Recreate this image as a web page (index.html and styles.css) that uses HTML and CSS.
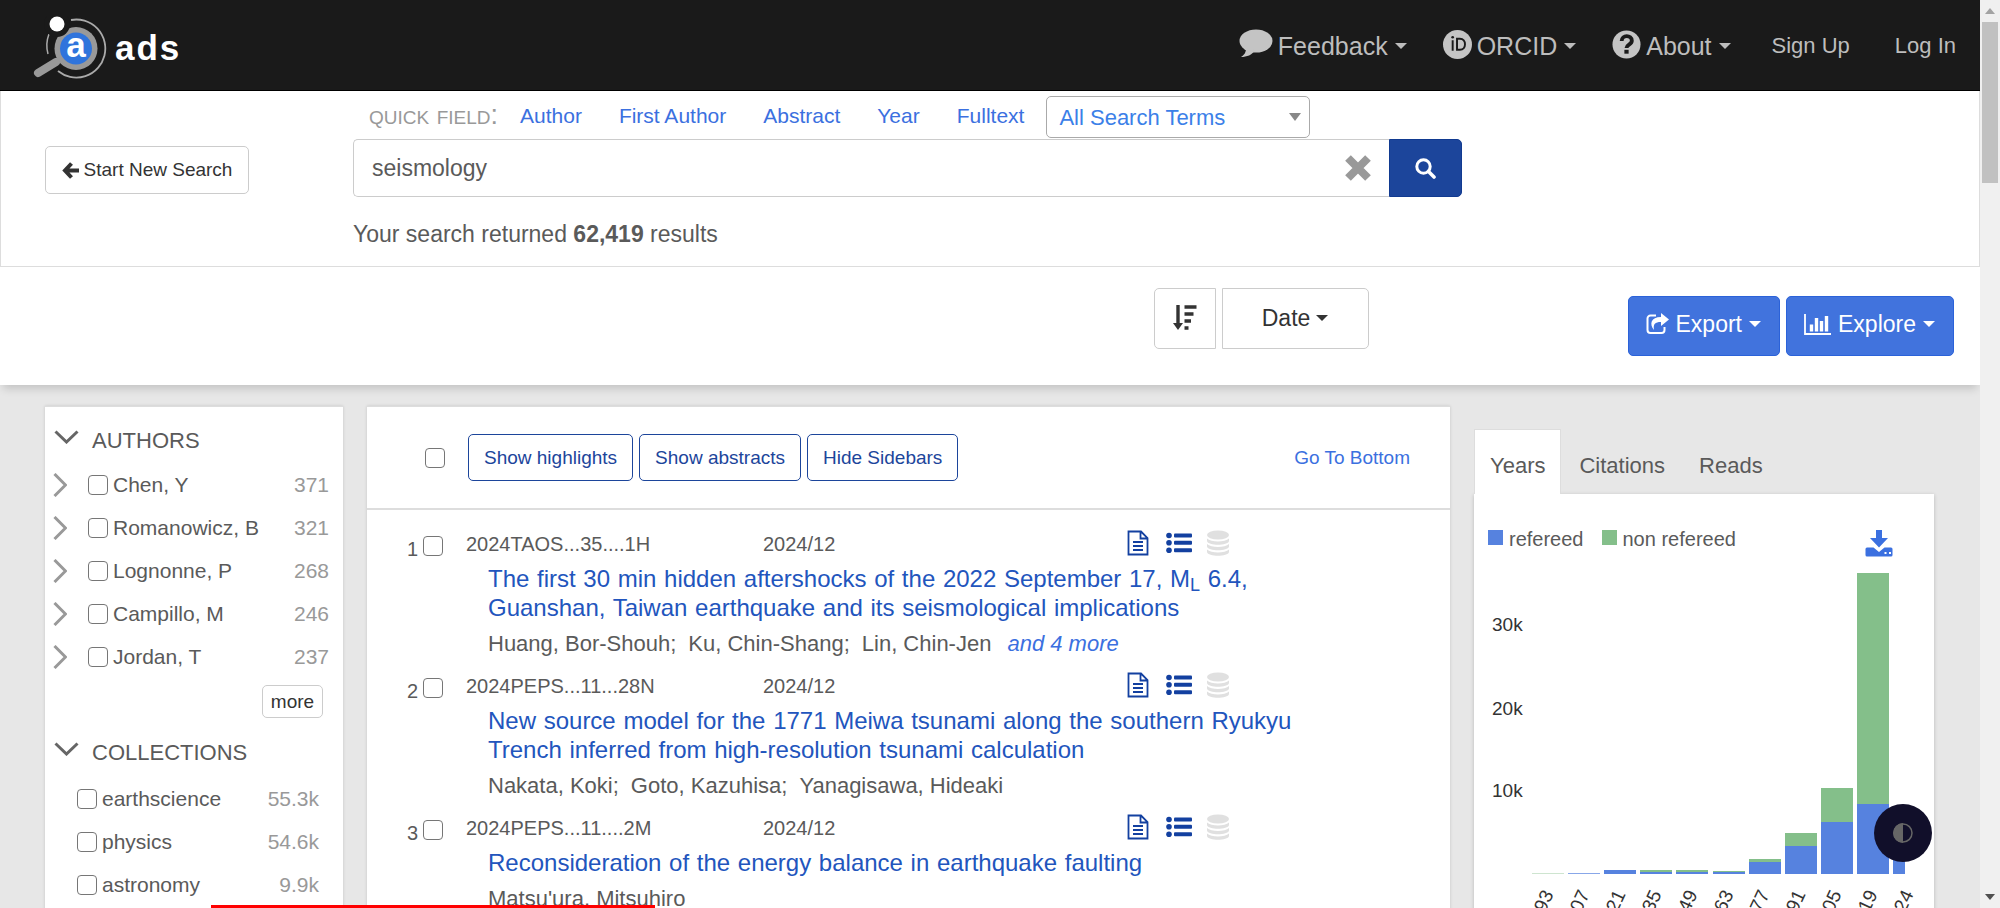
FILE: index.html
```html
<!DOCTYPE html>
<html lang="en">
<head>
<meta charset="utf-8">
<title>seismology - ads search</title>
<link rel="stylesheet" href="styles.css">
</head>
<body>
<svg class="defs" aria-hidden="true">
  <symbol id="i-file" viewBox="0 0 22 26"><path d="M1.500 1.500H14l6.500 6.500v16.500h-19zM13.500 1.500V8.500h7M6 12h10M6 16h10M6 20h10" fill="none" stroke="currentColor" stroke-width="1.800"/></symbol>
  <symbol id="i-list" viewBox="0 0 26 22"><g fill="currentColor"><circle cx="3" cy="3.500" r="2.800"/><circle cx="3" cy="10.800" r="2.800"/><circle cx="3" cy="18.200" r="2.800"/><rect x="8" y="1.500" width="18" height="4" rx="1"/><rect x="8" y="8.800" width="18" height="4" rx="1"/><rect x="8" y="16.200" width="18" height="4" rx="1"/></g></symbol>
  <symbol id="i-db" viewBox="0 0 22 26"><g fill="currentColor"><ellipse cx="11" cy="5" rx="11" ry="4.600"/><path d="M0 8.500c4 4 18 4 22 0v2.500c-1 5-21 5-22 0z"/><path d="M0 14c4 4 18 4 22 0v2.500c-1 5-21 5-22 0z"/><path d="M0 19.500c4 4 18 4 22 0v2.500c-1 5-21 5-22 0z"/></g></symbol>
  <symbol id="i-down" viewBox="0 0 24 14"><path d="M1 1.500l11 10.500L23 1.500" fill="none" stroke="currentColor" stroke-width="3"/></symbol>
  <symbol id="i-right" viewBox="0 0 14 24"><path d="M1.500 1l11 11-11 11" fill="none" stroke="currentColor" stroke-width="3"/></symbol>
  <symbol id="i-caret" viewBox="0 0 12 6"><path d="M0 0h12L6 6z" fill="currentColor"/></symbol>
</svg>
<div class="window">
<div class="page">
  <header class="topbar">
    <a class="brand" href="#">
      <svg class="brand-mark" viewBox="0 0 74 64" aria-hidden="true">
        <g fill="none" stroke="#aaa" stroke-width="1.800"><path d="M38 4a29 29 0 1 1-13 51"/><path d="M16 18a32 32 0 0 0-1 20" stroke-width="1.500"/></g>
        <path d="M23 46L5 57" stroke="#999" stroke-width="8" stroke-linecap="round"/>
        <circle cx="43" cy="32.500" r="21.500" fill="#999"/>
        <circle cx="43" cy="32.500" r="16" fill="#2f74dc"/>
        <circle cx="24" cy="8" r="13" fill="#1a1a1a"/>
        <circle cx="24" cy="8" r="7.500" fill="#fff"/>
        <text x="43" y="41" text-anchor="middle" class="brand-letter">a</text>
      </svg>
      <span class="brand-name">ads</span>
    </a>
    <nav class="topnav">
      <a class="nav-big" href="#"><svg width="34" height="30" viewBox="0 0 34 30" aria-hidden="true"><ellipse cx="17" cy="12" rx="16.500" ry="11.500" fill="#c4c4c4"/><path d="M7 19c0 5-2 7-5 9 6 0 11-2 14-7z" fill="#c4c4c4"/></svg><span>Feedback</span><svg class="caret"><use href="#i-caret"/></svg></a>
      <a class="nav-big" href="#"><svg width="29" height="29" viewBox="0 0 30 30" aria-hidden="true"><circle cx="15" cy="15" r="15" fill="#c4c4c4"/><path d="M10 10.500v11M14.500 9v11.500h3c7 0 7-11.500 0-11.500z" fill="none" stroke="#1a1a1a" stroke-width="2"/><circle cx="10" cy="7.500" r="1.400" fill="#1a1a1a"/></svg><span>ORCID</span><svg class="caret"><use href="#i-caret"/></svg></a>
      <a class="nav-big" href="#"><svg width="29" height="29" viewBox="0 0 30 30" aria-hidden="true"><circle cx="15" cy="15" r="14.500" fill="#c4c4c4"/><path d="M10 11.500c0-7 10.500-6.500 10.500-.5 0 4-5.500 4-5.500 7.500" fill="none" stroke="#1a1a1a" stroke-width="4"/><rect x="12.800" y="20.500" width="4.400" height="4" fill="#1a1a1a"/></svg><span>About</span><svg class="caret"><use href="#i-caret"/></svg></a>
      <a class="nav-small" href="#">Sign Up</a>
      <a class="nav-small" href="#">Log In</a>
    </nav>
  </header>

  <section class="search">
    <div class="search-side">
      <button class="btn start" type="button"><svg width="17" height="17" viewBox="0 0 17 17" aria-hidden="true"><path d="M9.500 1.500L3 8.500l6.500 7M3 8.500h14" fill="none" stroke="#333" stroke-width="4"/></svg>Start New Search</button>
    </div>
    <form class="search-form">
      <div class="quick">
        <span class="quick-label">quick field:</span>
        <a href="#">Author</a><a href="#">First Author</a><a href="#">Abstract</a><a href="#">Year</a><a href="#">Fulltext</a>
        <span class="select-wrap"><select aria-label="All Search Terms"><option>All Search Terms</option></select><svg class="select-caret" viewBox="0 0 12 8" aria-hidden="true"><path d="M0 0h12L6 8z" fill="#888"/></svg></span>
      </div>
      <div class="query">
        <input type="text" value="seismology" aria-label="Search query">
        <button class="clear" type="button" aria-label="Clear"><svg width="28" height="28" viewBox="0 0 28 28"><path d="M4 4l20 20M24 4L4 24" stroke="#999" stroke-width="8"/></svg></button>
        <button class="go" type="submit" aria-label="Search"><svg width="21" height="21" viewBox="0 0 21 21"><circle cx="8.500" cy="8.500" r="6.700" fill="none" stroke="#fff" stroke-width="3"/><path d="M13.500 13.500l5.500 5.500" stroke="#fff" stroke-width="3.600" stroke-linecap="round"/></svg></button>
      </div>
      <p class="returned">Your search returned <b>62,419</b> results</p>
    </form>
  </section>

  <section class="toolbar">
    <div class="sort">
      <button class="btn sort-dir" type="button" aria-label="Sort descending"><svg width="24" height="26" viewBox="0 0 24 26"><path d="M5 0v20" stroke="#333" stroke-width="3.400"/><path d="M0 18h10l-5 7z" fill="#333"/><path d="M11.500 2h12M11.500 9h9M11.500 16h6.500M11.500 23h4" stroke="#333" stroke-width="3.400"/></svg></button>
      <button class="btn sort-by" type="button">Date<svg class="caret"><use href="#i-caret"/></svg></button>
    </div>
    <div class="actions">
      <button class="action" type="button"><svg width="23" height="22" viewBox="0 0 23 22" aria-hidden="true"><path d="M10 2.500H4.500a3 3 0 0 0-3 3v11.500a3 3 0 0 0 3 3h11a3 3 0 0 0 3-3v-3" fill="none" stroke="#fff" stroke-width="2"/><path d="M15 0l8 6.500-8 6.500V9c-6 0-8 2-7 8-5-6-3-13 7-13z" fill="#fff"/></svg>Export<svg class="caret"><use href="#i-caret"/></svg></button>
      <button class="action" type="button"><svg width="27" height="21" viewBox="0 0 27 21" aria-hidden="true"><path d="M1 0v20h26" fill="none" stroke="#fff" stroke-width="1.800"/><path d="M7.500 17.500v-7M12.500 17.500V4M17.500 17.500V7M22.500 17.500V2" stroke="#fff" stroke-width="3.400"/></svg>Explore<svg class="caret"><use href="#i-caret"/></svg></button>
    </div>
  </section>

  <main class="content">
    <aside class="facets">
      <h2><svg class="chev-down"><use href="#i-down"/></svg>AUTHORS</h2>
      <ul class="facet authors">
        <li><svg class="chev-right"><use href="#i-right"/></svg><label><input type="checkbox">Chen, Y</label><span>371</span></li>
        <li><svg class="chev-right"><use href="#i-right"/></svg><label><input type="checkbox">Romanowicz, B</label><span>321</span></li>
        <li><svg class="chev-right"><use href="#i-right"/></svg><label><input type="checkbox">Lognonne, P</label><span>268</span></li>
        <li><svg class="chev-right"><use href="#i-right"/></svg><label><input type="checkbox">Campillo, M</label><span>246</span></li>
        <li><svg class="chev-right"><use href="#i-right"/></svg><label><input type="checkbox">Jordan, T</label><span>237</span></li>
      </ul>
      <button class="btn more" type="button">more</button>
      <h2><svg class="chev-down"><use href="#i-down"/></svg>COLLECTIONS</h2>
      <ul class="facet collections">
        <li><label><input type="checkbox">earthscience</label><span>55.3k</span></li>
        <li><label><input type="checkbox">physics</label><span>54.6k</span></li>
        <li><label><input type="checkbox">astronomy</label><span>9.9k</span></li>
      </ul>
    </aside>

    <section class="results">
      <div class="results-head">
        <input type="checkbox" aria-label="Select all">
        <button class="outline" type="button">Show highlights</button>
        <button class="outline" type="button">Show abstracts</button>
        <button class="outline" type="button">Hide Sidebars</button>
        <a class="bottom-link" href="#">Go To Bottom</a>
      </div>
      <ol class="items">
        <li>
          <label class="pick"><span>1</span><input type="checkbox"></label>
          <div class="item">
            <div class="meta"><span>2024TAOS...35....1H</span><span>2024/12</span><span class="icons"><svg class="i-file"><use href="#i-file"/></svg><svg class="i-list"><use href="#i-list"/></svg><svg class="i-db"><use href="#i-db"/></svg></span></div>
            <h3><a href="#">The first 30 min hidden aftershocks of the 2022 September 17, M<sub>L</sub> 6.4, Guanshan, Taiwan earthquake and its seismological implications</a></h3>
            <p><span>Huang, Bor-Shouh;</span><span>Ku, Chin-Shang;</span><span>Lin, Chin-Jen</span><a href="#">and 4 more</a></p>
          </div>
        </li>
        <li>
          <label class="pick"><span>2</span><input type="checkbox"></label>
          <div class="item">
            <div class="meta"><span>2024PEPS...11...28N</span><span>2024/12</span><span class="icons"><svg class="i-file"><use href="#i-file"/></svg><svg class="i-list"><use href="#i-list"/></svg><svg class="i-db"><use href="#i-db"/></svg></span></div>
            <h3><a href="#">New source model for the 1771 Meiwa tsunami along the southern Ryukyu Trench inferred from high-resolution tsunami calculation</a></h3>
            <p><span>Nakata, Koki;</span><span>Goto, Kazuhisa;</span><span>Yanagisawa, Hideaki</span></p>
          </div>
        </li>
        <li>
          <label class="pick"><span>3</span><input type="checkbox"></label>
          <div class="item">
            <div class="meta"><span>2024PEPS...11....2M</span><span>2024/12</span><span class="icons"><svg class="i-file"><use href="#i-file"/></svg><svg class="i-list"><use href="#i-list"/></svg><svg class="i-db"><use href="#i-db"/></svg></span></div>
            <h3><a href="#">Reconsideration of the energy balance in earthquake faulting</a></h3>
            <p><span>Matsu'ura, Mitsuhiro</span></p>
          </div>
        </li>
      </ol>
    </section>

    <aside class="graphs">
      <nav class="tabs"><button class="tab active" type="button">Years</button><button class="tab" type="button">Citations</button><button class="tab" type="button">Reads</button></nav>
      <div class="panel">
        <div class="legend">
          <span class="key refereed">refereed</span><span class="key non">non refereed</span>
          <a class="download" href="#" aria-label="Download"><svg width="28" height="27" viewBox="0 0 28 27"><path d="M11 0h6v8h6l-9 9.500L5 8h6z" fill="#3b70e0"/><path d="M2 17.500h6.500L14 22l5.500-4.500H26a1.500 1.500 0 0 1 1.500 1.500v6a1.500 1.500 0 0 1-1.500 1.500H2A1.500 1.500 0 0 1 .5 25v-6A1.500 1.500 0 0 1 2 17.500z" fill="#3b70e0"/><path d="M19.500 23h2M24 23h2" stroke="#fff" stroke-width="1.800"/></svg></a>
        </div>
        <svg class="chart" viewBox="0 0 460 400" role="img" aria-label="Papers per year">
          <g class="ticks"><text x="18" y="72">30k</text><text x="18" y="156">20k</text><text x="18" y="238">10k</text></g>
          <g fill="#84bf8a">
            <rect x="58" y="314" width="32" height="1" opacity=".4"/><rect x="166" y="311" width="32" height="2"/><rect x="202" y="311" width="32" height="2"/><rect x="239" y="312" width="32" height="1"/><rect x="275" y="300" width="32" height="3"/><rect x="311" y="274" width="32" height="13"/><rect x="347" y="229" width="32" height="34"/><rect x="383" y="14" width="32" height="231"/>
          </g>
          <g fill="#5682df">
            <rect x="94" y="314" width="32" height="1" opacity=".7"/><rect x="130" y="311" width="32" height="4"/><rect x="166" y="313" width="32" height="2"/><rect x="202" y="313" width="32" height="2"/><rect x="239" y="313" width="32" height="2"/><rect x="275" y="303" width="32" height="12"/><rect x="311" y="287" width="32" height="28"/><rect x="347" y="263" width="32" height="52"/><rect x="383" y="245" width="32" height="70"/><rect x="419" y="290" width="12" height="25"/>
          </g>
          <g class="years">
            <text transform="translate(80 335) rotate(-65)">1893</text><text transform="translate(116 335) rotate(-65)">1907</text><text transform="translate(152 335) rotate(-65)">1921</text><text transform="translate(188 335) rotate(-65)">1935</text><text transform="translate(224 335) rotate(-65)">1949</text><text transform="translate(260 335) rotate(-65)">1963</text><text transform="translate(296 335) rotate(-65)">1977</text><text transform="translate(332 335) rotate(-65)">1991</text><text transform="translate(368 335) rotate(-65)">2005</text><text transform="translate(404 335) rotate(-65)">2019</text><text transform="translate(440 335) rotate(-65)">2024</text>
          </g>
        </svg>
      </div>
    </aside>
  </main>
</div>
<div class="scrollbar" aria-hidden="true">
  <svg viewBox="0 0 20 22"><path d="M5 14h10l-5-6z" fill="#a3a3a3"/></svg>
  <div class="thumb"></div>
  <svg class="last" viewBox="0 0 20 22"><path d="M5 8h10l-5 6z" fill="#505050"/></svg>
</div>
</div>
<button class="contrast" type="button" aria-label="Toggle dark mode"><svg width="20" height="20" viewBox="0 0 20 20"><circle cx="10" cy="10" r="9" fill="none" stroke="#666" stroke-width="1.500"/><path d="M10 0a10 10 0 0 0 0 20z" fill="#666"/></svg></button>
<div class="progress"></div>
</body>
</html>
```
FILE: styles.css
```css
* { box-sizing: border-box; }
body { margin: 0; font: 20px/28px "Liberation Sans", Arial, sans-serif; color: #5a5a5a; background: #e7e7e7; overflow: hidden; }
a { color: #3b70e0; text-decoration: none; }
button, input, select { font: inherit; color: inherit; }
button { padding: 0; cursor: pointer; }
h2, h3, p, ul, ol { margin: 0; padding: 0; font-weight: 400; list-style: none; }
svg { flex: none; }
input[type="checkbox"] { appearance: none; flex: none; width: 20px; height: 20px; margin: 0; border: 1px solid #767676; border-radius: 4px; background: #fff; }
.defs { display: none; }
.caret { width: 12px; height: 6px; margin-left: 8px; }

.window { display: flex; height: 100vh; }
.page { flex: 1; min-width: 0; overflow: hidden; }

.topbar { display: flex; justify-content: space-between; height: 91px; padding: 0 24px 0 33px; background: #1a1a1a; border-bottom: 1px solid #000; }
.brand { display: flex; gap: 8px; padding-top: 16px; }
.brand-mark { width: 74px; height: 64px; }
.brand-letter { font: bold 35px "Liberation Sans", Arial, sans-serif; fill: #fff; }
.brand-name { font-weight: bold; font-size: 35px; line-height: 63px; letter-spacing: 2px; color: #fff; }
.topnav { display: flex; align-items: center; padding-top: 2px; }
.topnav a { color: #bdbdbd; display: flex; align-items: center; }
.nav-big { font-size: 25px; gap: 5px; margin-right: 36px; }
.nav-big .caret { margin-left: 2px; }
.nav-big > svg:first-child { margin-bottom: 4px; }
.nav-small { font-size: 22px; margin-left: 5px; margin-right: 40px; }
.nav-small:last-child { margin-right: 0; }

.search { display: grid; grid-template-columns: 352px 1fr; height: 176px; padding-top: 3px; background: #fff; border: 1px solid #ddd; border-top: 0; }
.search-side { padding: 52px 0 0 44px; }
.btn { display: flex; align-items: center; justify-content: center; background: #fff; border: 1px solid #ccc; border-radius: 5px; color: #333; }
.start { gap: 5px; width: 204px; height: 48px; font-size: 19px; }
.search-form { width: 1109px; }
.quick { display: flex; align-items: flex-start; height: 45px; padding-left: 16px; }
.quick-label { width: 151px; font-size: 27px; line-height: 42px; font-variant: small-caps; color: #999; }
.quick a { margin-right: 37px; font-size: 21px; line-height: 44px; }
.quick a:nth-of-type(5) { margin-right: 22px; }
.select-wrap { position: relative; width: 264px; margin-top: 2px; }
.select-wrap select { appearance: none; width: 100%; height: 42px; padding: 2px 12px 0; font-size: 22px; color: #3b80e8; background: #fff; border: 1px solid #aaa; border-radius: 5px; }
.select-caret { position: absolute; right: 9px; top: 17px; width: 12px; height: 8px; }
.query { display: flex; height: 58px; }
.query input { flex: 1; min-width: 0; padding: 0 18px; font-size: 23px; border: 1px solid #ccc; border-right: 0; border-radius: 5px 0 0 5px; outline: 0; }
.clear { display: flex; align-items: center; justify-content: center; width: 63px; background: #fff; border: solid #ccc; border-width: 1px 0; }
.go { display: flex; align-items: center; justify-content: center; width: 73px; background: #1c459b; border: 1px solid #113a90; border-radius: 0 5px 5px 0; }
.returned { margin-top: 23px; font-size: 23px; }

.toolbar { display: flex; justify-content: flex-end; align-items: flex-start; gap: 259px; height: 118px; padding: 21px 26px 0 0; background: #fff; box-shadow: 0 7px 8px -3px rgba(0, 0, 0, .15); }
.sort { display: flex; gap: 6px; font-size: 23px; }
.btn.sort-dir { width: 62px; height: 61px; padding-bottom: 2px; border-radius: 5px 0 0 5px; }
.btn.sort-by { width: 147px; height: 61px; padding-bottom: 2px; border-radius: 0 5px 5px 0; }
.sort-by .caret { margin-left: 6px; }
.actions { display: flex; gap: 6px; padding-top: 8px; font-size: 23px; }
.action { display: flex; align-items: center; gap: 7px; height: 60px; padding: 0 18px 4px 17px; color: #fff; background: #4173dd; border: 1px solid #2b62d9; border-radius: 5px; }
.action .caret { margin-left: 0; }

.content { display: grid; grid-template-columns: 298px 1fr 460px; gap: 24px; padding: 21px 46px 0 45px; }
.facets, .results { height: 600px; background: #fff; border-top: 1px solid #ddd; box-shadow: 0 0 3px rgba(0, 0, 0, .15); }
.facets { padding-top: 17px; }
.facets h2 { display: flex; gap: 13px; height: 39px; padding-left: 9px; font-size: 22px; line-height: 34px; }
.chev-down { width: 25px; height: 14px; margin-top: 6px; color: #666; }
.facet li { display: flex; align-items: center; height: 43px; padding-right: 14px; }
.facet label { display: flex; align-items: center; flex: 1; gap: 5px; font-size: 21px; }
.facet li span { font-size: 21px; color: #999; }
.chev-right { width: 14px; height: 24px; margin: 0 21px 0 8px; color: #999; }
.facet.collections li { padding: 0 24px 0 32px; }
.btn.more { width: 61px; height: 33px; margin: 7px 20px 18px auto; font-size: 19px; }
.more + h2 { margin-bottom: 2px; }

.results-head { display: flex; align-items: center; gap: 6px; height: 103px; padding: 0 40px 0 58px; border-bottom: 2px solid #ddd; font-size: 19px; }
.results-head input { margin-right: 17px !important; }
.outline { height: 47px; padding: 0 15px; color: #1c459b; background: #fff; border: 1px solid #1c459b; border-radius: 5px; }
.bottom-link { margin-left: auto; }
.items { padding-top: 20px; }
.items li { display: flex; }
.pick { display: flex; gap: 5px; width: 99px; padding-left: 40px; line-height: 38px; }
.pick input { margin-top: 6px !important; }
.item { width: 876px; padding-bottom: 14px; }
.meta { display: grid; grid-template-columns: 297px 364px 1fr; }
.icons { display: flex; align-items: center; height: 26px; color: #1340a0; }
.i-file { width: 22px; height: 26px; }
.i-list { width: 26px; height: 22px; margin: 0 15px 0 17px; }
.i-db { width: 22px; height: 26px; color: #e0e0e0; }
.item h3 { margin: 6px 0 8px 22px; font-size: 24px; line-height: 29px; word-spacing: 1px; }
.item h3 a { color: #2255bd; }
.item sub { font-size: 18px; line-height: 0; vertical-align: -4px; }
.item p { display: flex; gap: 12px; margin-left: 22px; font-size: 22px; }
.item p a { margin-left: 4px; font-style: italic; }

.tabs { display: flex; margin-top: 23px; }
.tab { height: 65px; padding: 7px 15px 0; font-size: 22px; background: none; border: 1px solid transparent; border-bottom: 0; margin-right: 2px; }
.tab.active { background: #fff; border-color: #ddd; }
.panel { background: #fff; box-shadow: 0 1px 4px rgba(0, 0, 0, .2); }
.legend { display: flex; gap: 18px; padding: 31px 41px 0 14px; height: 65px; }
.key { display: flex; gap: 6px; }
.key::before { content: ""; width: 15px; height: 15px; margin-top: 5px; background: #5682df; }
.key.non::before { background: #84bf8a; }
.download { margin: 5px 0 0 auto; }
.chart { display: block; width: 100%; }
.chart text { font-size: 19px; fill: #333; }
.years text { text-anchor: end; }

.scrollbar { display: flex; flex-direction: column; width: 20px; background: #f0f0f0; }
.thumb { height: 161px; margin: 0 2px; background: #c1c1c1; }
.scrollbar .last { margin-top: auto; }
.contrast { position: fixed; right: 68px; bottom: 46px; display: flex; align-items: center; justify-content: center; width: 58px; height: 58px; background: #110f2a; border: 0; border-radius: 50%; }
.progress { position: fixed; left: 211px; bottom: 0; width: 444px; height: 3px; background: #f00; }
```
